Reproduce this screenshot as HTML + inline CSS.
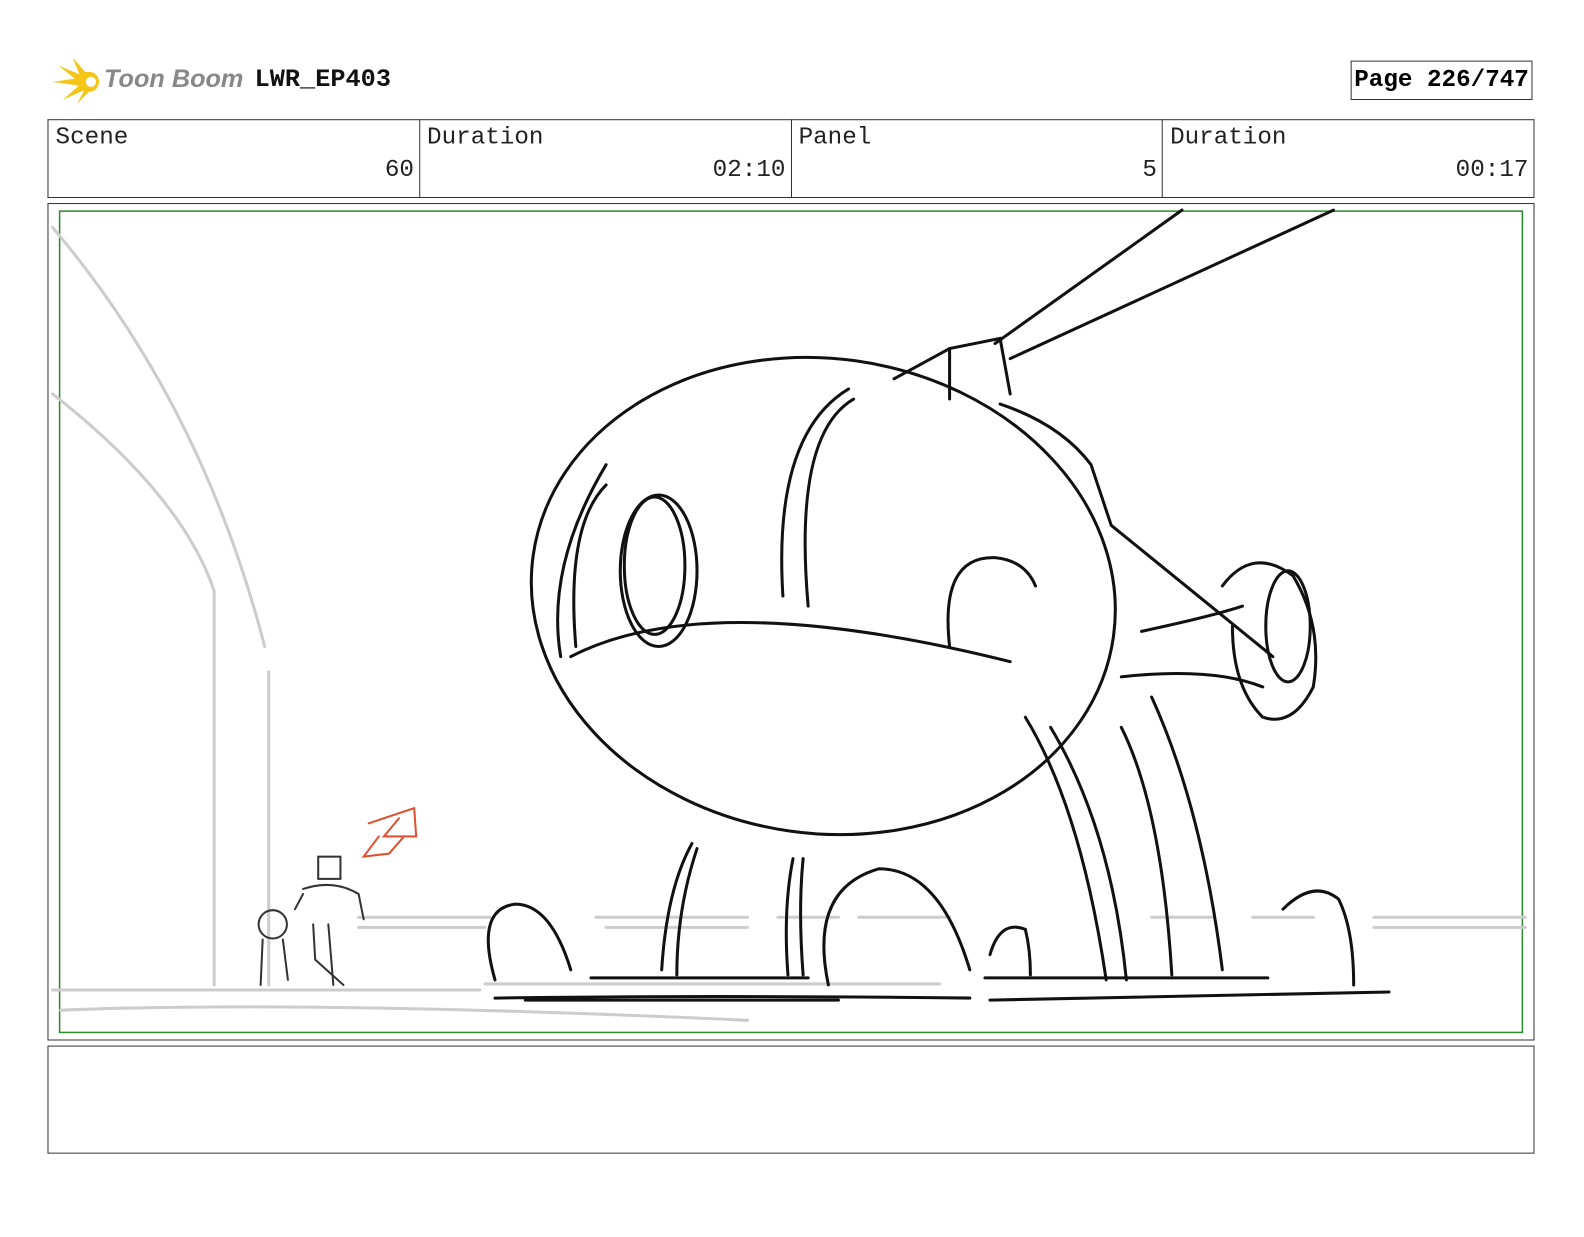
<!DOCTYPE html>
<html><head><meta charset="utf-8"><style>
body{margin:0;width:1584px;height:1224px;background:#fff;position:relative;overflow:hidden;font-family:"Liberation Mono",monospace}
#w{position:absolute;left:0;top:0;width:1568px;height:1212px;transform:scale(1.0102);transform-origin:0 0}
.a{position:absolute}
table{position:absolute;left:47px;top:118px;width:1472px;height:78px;border-collapse:collapse}
td{border:1px solid #333;width:25%;vertical-align:top;padding:0;position:relative;font-size:24px;color:#222}
td span{position:absolute}
</style></head><body><div id="w">
<svg class="a" style="left:50px;top:55px" width="60" height="50" viewBox="0 0 60 50">
<g fill="#f5c518"><path d="M2 26 L30 22 L30 30Z"/><path d="M8 10 L32 20 L28 26Z"/><path d="M12 44 L30 28 L34 34Z"/><path d="M22 2 L36 18 L30 22Z"/><path d="M26 48 L36 30 L40 34Z"/><circle cx="38" cy="26" r="10"/></g><circle cx="40" cy="26" r="5" fill="#fff"/></svg>
<div class="a" style="left:103px;top:64px;font:italic bold 25px 'Liberation Sans',sans-serif;color:#888">Toon Boom</div>
<div class="a" style="left:252px;top:64px;font-weight:bold;font-size:25px;color:#111">LWR_EP403</div>
<div class="a" style="left:1337px;top:60px;width:180px;height:39px;border:1px solid #333;box-sizing:border-box;font-weight:bold;font-size:24px;text-align:center;line-height:37px">Page 226/747</div>
<table><tr>
<td><span style="left:7px;top:4px">Scene</span><span style="right:5px;top:36px">60</span></td>
<td><span style="left:7px;top:4px">Duration</span><span style="right:5px;top:36px">02:10</span></td>
<td><span style="left:7px;top:4px">Panel</span><span style="right:5px;top:36px">5</span></td>
<td><span style="left:7px;top:4px">Duration</span><span style="right:5px;top:36px">00:17</span></td>
</tr></table>
<div class="a" style="left:47px;top:201px;width:1472px;height:829px;border:1px solid #333;box-sizing:border-box"></div>
<div class="a" style="left:47px;top:1035px;width:1472px;height:107px;border:1px solid #333;box-sizing:border-box"></div>
<svg class="a" style="left:0;top:0" width="1584" height="1224" fill="none" stroke-linecap="round">
<rect x="59" y="209" width="1448" height="813" stroke="#2a8a2a" stroke-width="1.5"/>
<g stroke="#ccc" stroke-width="3">
<path d="M52 225 Q200 400 262 640"/><path d="M52 390 Q180 490 212 585"/><path d="M212 585 V975"/><path d="M266 665 V975"/><path d="M52 980 H475"/><path d="M355 908 H485 M355 918 H480 M590 908 H740 M600 918 H740 M770 908 H830 M850 908 H940 M1140 908 H1200 M1240 908 H1300 M1360 908 H1510 M1360 918 H1510"/><path d="M480 974 H930"/><path d="M60 1000 Q300 990 740 1010"/>
</g>
<g stroke="#111" stroke-width="3">
<ellipse cx="815" cy="590" rx="290" ry="235" transform="rotate(8 815 590)"/>
<path d="M565 650 Q700 580 1000 655"/>
<ellipse cx="652" cy="565" rx="38" ry="75"/><ellipse cx="648" cy="560" rx="30" ry="68"/>
<path d="M940 640 Q930 550 985 552 Q1015 555 1025 580"/>
<path d="M775 590 Q765 430 840 385 M800 600 Q785 430 845 395"/>
<path d="M555 650 Q540 560 600 460 M570 640 Q560 520 600 480"/>
<path d="M885 375 L940 345 L990 335 L1000 390 M940 345 L940 395 M985 340 L1170 208 M1000 355 L1320 208"/>
<path d="M990 400 Q1050 420 1080 460 L1100 520 L1260 650"/>
<path d="M1210 580 Q1240 540 1280 570 Q1310 620 1300 680 Q1280 720 1250 710 Q1220 680 1220 620"/><ellipse cx="1275" cy="620" rx="22" ry="55"/>
<path d="M1130 625 Q1200 610 1230 600 M1110 670 Q1200 660 1250 680"/>
<path d="M1015 710 Q1070 800 1095 970 M1040 720 Q1100 820 1115 970 M1110 720 Q1150 800 1160 965 M1140 690 Q1190 800 1210 960"/>
<path d="M685 835 Q660 880 655 960 M690 840 Q670 900 670 965 M785 850 Q775 900 780 965 M795 850 Q790 900 795 965"/>
<path d="M490 970 Q470 900 510 895 Q545 895 565 960"/>
<path d="M820 975 Q800 880 870 860 Q930 860 960 960"/>
<path d="M980 945 Q990 910 1015 920 Q1020 940 1020 965"/>
<path d="M1270 900 Q1300 870 1325 890 Q1340 920 1340 975"/>
<path d="M585 968 H800 M975 968 H1255 M490 988 Q700 985 960 988 M980 990 L1375 982 M520 990 H830"/>
</g>
<g stroke="#333" stroke-width="2">
<circle cx="270" cy="915" r="14"/><path d="M260 930 L258 975 M280 930 L285 970"/>
<rect x="315" y="848" width="22" height="22"/><path d="M300 880 Q330 870 355 885 L360 910 M300 885 L292 900 M310 915 L312 950 L340 975 M325 915 L330 975"/>
</g>
<path d="M365 815 L410 800 L412 828 L380 828 L395 810 M375 828 L360 848 L385 845 L400 828" stroke="#e05030" stroke-width="2"/>
</svg>
</div></body></html>
